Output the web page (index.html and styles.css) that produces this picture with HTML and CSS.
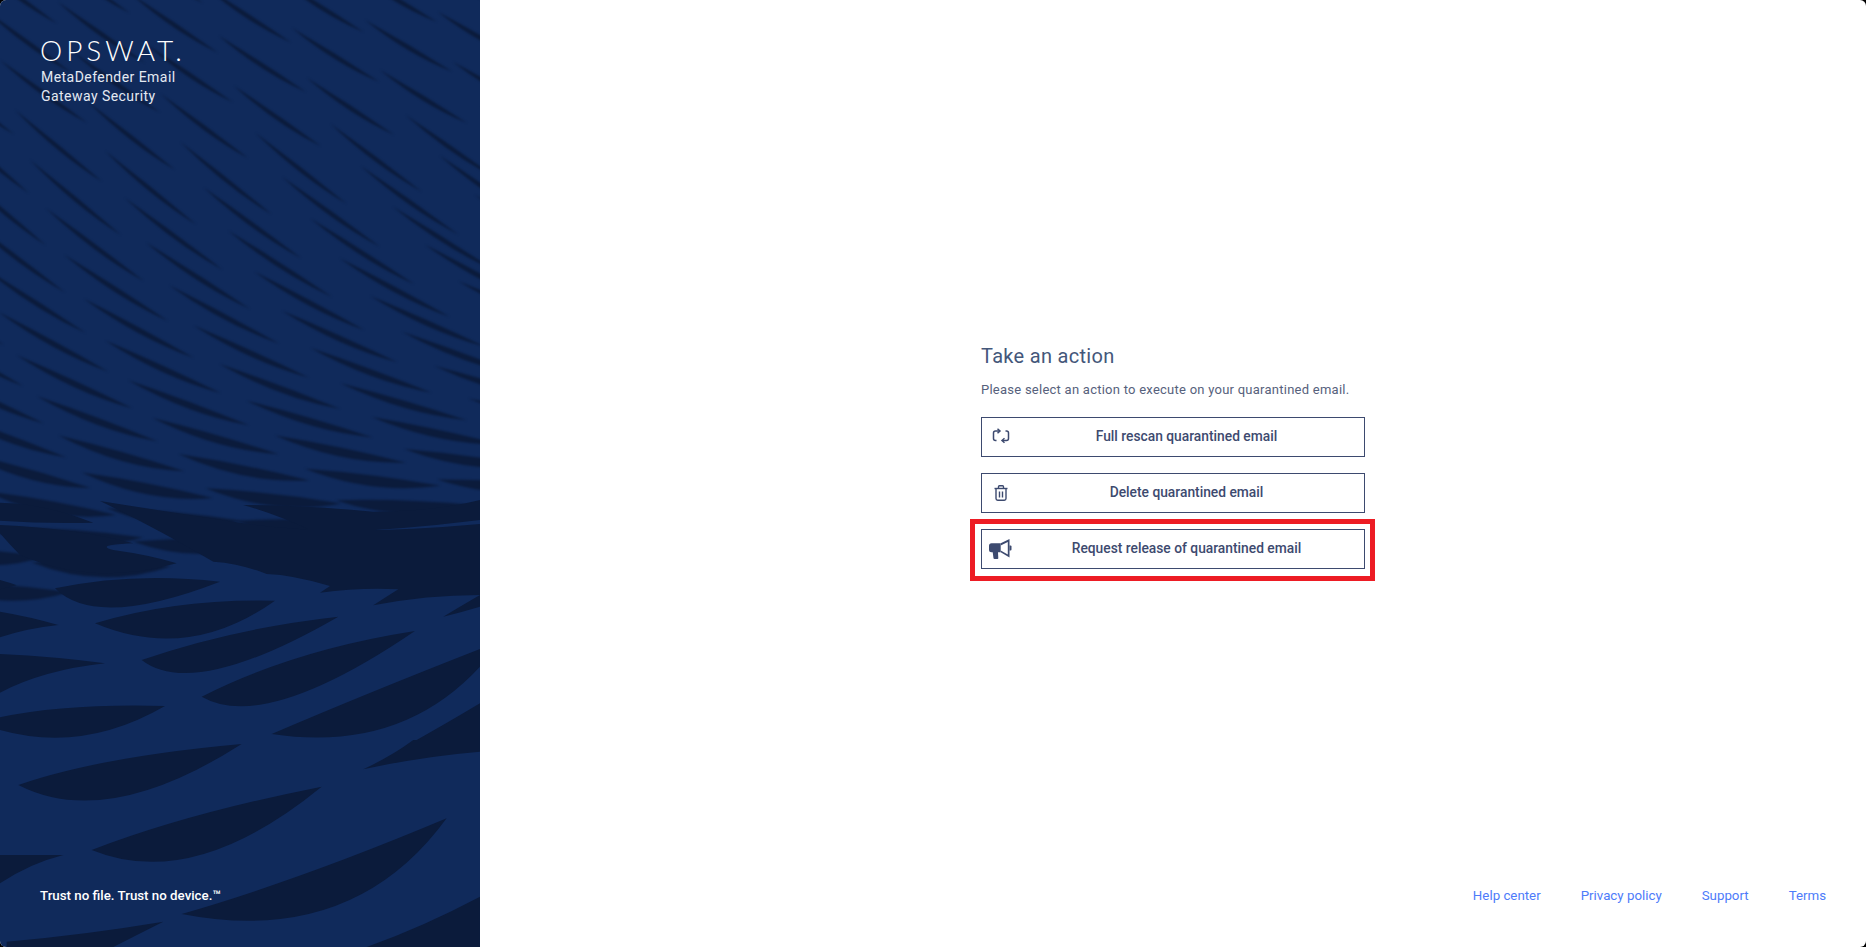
FILE: index.html
```html
<!DOCTYPE html>
<html lang="en">
<head>
  <meta charset="UTF-8" />
  <title>MetaDefender Email Gateway Security</title>
  <link rel="stylesheet" href="styles.css">
</head>
<body>
  <div class="app">
    <aside class="brand">
      <svg class="brand-bg" id="brandBg" viewBox="0 0 480 947" aria-hidden="true"></svg>
      <div class="brand-top">
        <div class="logo">OPSWAT.</div>
        <div class="product">MetaDefender Email<br>Gateway Security</div>
      </div>
      <div class="tagline">Trust no file. Trust no device.™</div>
    </aside>

    <main class="content">
      <section class="action-area">
        <div class="action-box">
          <h1>Take an action</h1>
          <p>Please select an action to execute on your quarantined email.</p>
          <div class="actions">
            <button class="action-btn">
              <span class="btn-icon">
                <svg width="18" height="17" viewBox="0 0 18 17" fill="none" stroke="currentColor" stroke-width="1.5">
                  <path d="M7 3H3.5Q1.5 3 1.5 5V10.500Q1.500 12.500 3.500 12.500H4.500" />
                  <path d="M5.500 .8L8 3L5.500 5.200" />
                  <path d="M11 12.500H14.500Q16.500 12.500 16.500 10.500V5Q16.500 3 14.500 3H13.500" />
                  <path d="M12.500 10.300L10 12.500L12.500 14.700" />
                </svg>
              </span>
              <span class="btn-label">Full rescan quarantined email</span>
            </button>
            <button class="action-btn">
              <span class="btn-icon">
                <svg width="14" height="16" viewBox="0 0 14 16" fill="none" stroke="currentColor" stroke-width="1.4">
                  <path d="M.5 3.500H13.500" />
                  <path d="M4.500 3.500V1.700Q4.500 .8 5.400 .8H8.600Q9.500 .8 9.500 1.700V3.500" />
                  <path d="M2 3.500V13.500Q2 15.200 3.700 15.200H10.300Q12 15.200 12 13.500V3.500" />
                  <path d="M5.500 6.500V12.500M8.500 6.500V12.500" />
                </svg>
              </span>
              <span class="btn-label">Delete quarantined email</span>
            </button>
            <div class="release-row">
              <button class="action-btn">
                <span class="btn-icon">
                  <svg width="23" height="20" viewBox="0 0 23 20" fill="currentColor">
                    <path d="M2.500 4.300H11.700V13.300H9L9.300 19.200Q9.300 20 8.500 20H5.500Q4.700 20 4.500 19.200L3.700 13.300H2.500Q0 13.300 0 10.800V6.800Q0 4.300 2.500 4.300Z" />
                    <path d="M11.700 4.300L20.500 0V18.500L11.700 13.300V11.500L18.800 15.500V3L11.700 6.500Z" />
                    <path d="M20.500 6.500H21.500Q22.500 6.500 22.500 7.500V10.500Q22.500 11.500 21.500 11.500H20.500Z" />
                  </svg>
                </span>
                <span class="btn-label">Request release of quarantined email</span>
              </button>
              <div class="highlight"></div>
            </div>
          </div>
        </div>
      </section>
      <footer class="links">
        <a href="#">Help center</a>
        <a href="#">Privacy policy</a>
        <a href="#">Support</a>
        <a href="#">Terms</a>
      </footer>
    </main>
  </div>
  <script src="bg.js"></script>
</body>
</html>
```

FILE: styles.css
```css
* {
  box-sizing: border-box;
}

html, body {
  height: 100%;
}

body {
  margin: 0;
  background: #000;
  font-family: Roboto, "Liberation Sans", sans-serif;
  overflow: hidden;
}

.app {
  display: flex;
  height: 100%;
  background: #fff;
  border-radius: 6px;
  overflow: hidden;
}

/* left panel */
.brand {
  position: relative;
  width: 480px;
  flex-shrink: 0;
  display: flex;
  flex-direction: column;
  justify-content: space-between;
  padding: 36px 40px 41px;
  background: #102a5b;
  color: #fff;
}

.brand-bg {
  position: absolute;
  left: 0;
  top: 0;
  width: 100%;
  height: 100%;
}

.brand-bg path {
  fill: #0b1b3b;
  filter: blur(1.2px);
}

.brand-top, .tagline {
  position: relative;
}

.logo {
  font-family: Lato, sans-serif;
  font-weight: 300;
  font-size: 28px;
  line-height: 28px;
  letter-spacing: 4px;
}

.product {
  margin-top: 4px;
  padding-left: 1px;
  font-size: 14px;
  line-height: 19px;
  letter-spacing: .45px;
  color: #e4e9f2;
}

.tagline {
  font-size: 13.3px;
  font-weight: 500;
  line-height: 20px;
}

/* right side */
.content {
  flex: 1;
  display: flex;
  flex-direction: column;
}

.action-area {
  flex: 1;
  display: flex;
  align-items: center;
  justify-content: center;
  padding-top: 24px;
}

.action-box {
  width: 384px;
}

.action-box h1 {
  margin: 0 0 10px;
  font-size: 20px;
  font-weight: 400;
  line-height: 28px;
  letter-spacing: .3px;
  color: #44577a;
}

.action-box p {
  margin: 0 0 17px;
  font-size: 13px;
  line-height: 20px;
  letter-spacing: .25px;
  color: #56617c;
}

.actions {
  display: flex;
  flex-direction: column;
  gap: 16px;
}

.action-btn {
  display: flex;
  align-items: center;
  width: 100%;
  height: 40px;
  padding: 0 4px 0 6px;
  background: #fff;
  border: 1px solid #3d4a6f;
  color: #3d4a6f;
  font-family: inherit;
  font-size: 13.8px;
  font-weight: 500;
  cursor: pointer;
}

.btn-icon {
  display: flex;
  justify-content: center;
  width: 25px;
}

.btn-label {
  flex: 1;
  padding-bottom: 2px;
  text-align: center;
}

.release-row {
  position: relative;
}

.highlight {
  position: absolute;
  top: -10px;
  right: -10px;
  bottom: -12px;
  left: -11px;
  border: 5px solid #ed1c24;
}

.links {
  display: flex;
  justify-content: flex-end;
  gap: 40px;
  padding: 0 40px 41px;
}

.links a {
  font-size: 13.3px;
  line-height: 20px;
  color: #4d7bfa;
  text-decoration: none;
}
```

FILE: bg.js
```js
// panel artwork: dark slivers on a navy ground
const svg = document.getElementById("brandBg");
const NS = "http://www.w3.org/2000/svg";

function addPath(d, transform) {
  const path = document.createElementNS(NS, "path");
  path.setAttribute("d", d);
  if (transform) path.setAttribute("transform", transform);
  svg.appendChild(path);
}

function lerp(table, y) {
  if (y <= table[0][0]) return table[0][1];
  for (let i = 1; i < table.length; i++) {
    if (y <= table[i][0]) {
      const a = table[i - 1], b = table[i];
      return a[1] + (b[1] - a[1]) * (y - a[0]) / (b[0] - a[0]);
    }
  }
  return table[table.length - 1][1];
}

const SLOPE = [[60, .72], [130, .87], [180, .81], [230, .72], [280, .6], [353, .47], [390, .4], [433, .31], [470, .23], [502, .15], [540, .04]];
const BELLY = [[130, 9], [300, 10], [400, 12], [470, 18], [540, 26]];

// upper field, staggered rows that flatten out going down
let d = "";
let rowX = -30, rowY = -40;
while (rowY < 530) {
  const t = Math.max(0, (rowY - 130) / 370);
  const stepX = 73 + 27 * t, stepY = -8 - 12 * t, len = 87 + 50 * t;
  for (let c = -4; c < 9; c++) {
    const x = rowX + c * stepX, y = rowY + c * stepY;
    if (x > 490 || x + len < -10) continue;
    const slope = lerp(SLOPE, y) - x * .00035;
    const belly = lerp(BELLY, y);
    const mx = x + len * .5, my = y + len * slope * .5;
    const x2 = x + len, y2 = y + len * slope;
    d += `M${x} ${y}Q${mx} ${my - belly * .2} ${x2} ${y2}Q${mx} ${my + belly} ${x} ${y}Z`;
  }
  rowX += 15 + 14 * t;
  rowY += 50 - 18 * t;
}
addPath(d);

// mid section, traced at 3x from y=500
addPath([
  "M0 8Q130 10 280 68Q140 72 0 62Z",
  "M0 75Q230 85 400 130Q280 135 340 150Q450 165 530 190Q280 260 60 165Q30 135 0 100Z",
  "M0 240Q30 248 50 256Q25 262 0 268Z",
  "M165 265Q400 215 660 245Q288 389 165 265Z",
  "M285 370Q530 295 825 302Q565 488 285 370Z",
  "M0 335Q90 350 175 375Q80 385 0 412Z",
  "M425 480Q700 385 1015 350Q580 601 425 480Z",
  "M0 462Q170 470 315 490Q130 510 0 578Z",
  "M605 590Q880 450 1245 393Q795 699 605 590Z",
  "M0 652Q200 610 495 618Q250 760 0 690Z",
  "M815 702Q1100 580 1440 447V500Q1200 760 815 702Z",
  "M1250 720Q1340 670 1440 610V720Z",
  "M300 3Q500 35 720 68Q1000 112 1440 72V285Q1280 285 1120 316Q1160 290 1195 268Q1080 262 960 278Q985 262 990 258Q880 225 800 222Q720 190 640 185Q470 85 300 3Z",
  "M730 15Q900 15 1120 35Q1300 35 1440 0V60Q1200 90 950 100Q850 50 730 15Z",
  "M1330 350Q1380 320 1440 285V320Q1390 335 1330 350Z"
].join(""), "translate(0 500) scale(.3333)");

// bottom section, traced at 3x from y=740
addPath([
  "M55 135Q300 50 725 12Q320 271 55 135Z",
  "M275 330Q560 220 965 140Q580 455 275 330Z",
  "M0 345H190Q90 370 0 430Z",
  "M545 522Q900 420 1340 235Q1058 622 545 522Z",
  "M20 605Q250 585 490 545Q400 590 340 621H20Z",
  "M1100 621Q1270 560 1440 470V621Z",
  "M1090 88Q1180 45 1240 0H1440V35Q1260 50 1090 88Z"
].join(""), "translate(0 740) scale(.3333)");
```
